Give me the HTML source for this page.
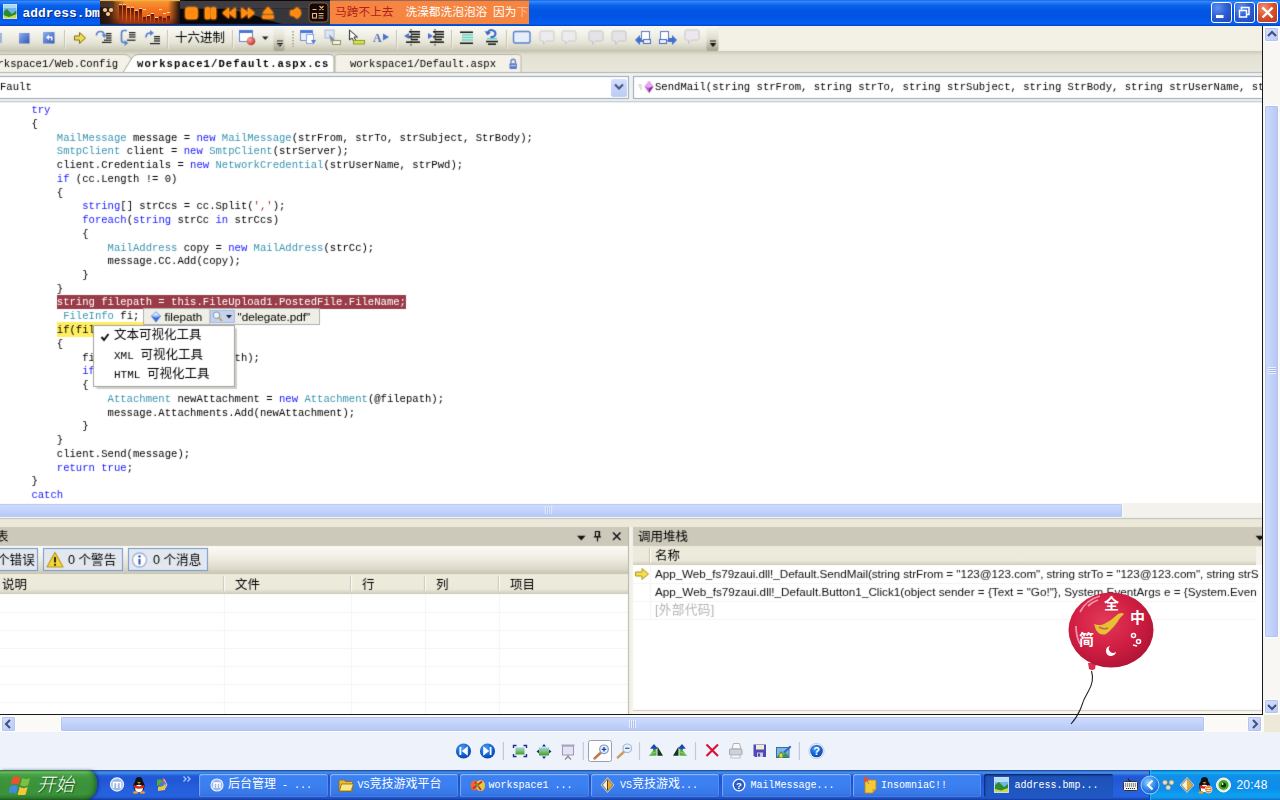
<!DOCTYPE html>
<html lang="zh-CN">
<head>
<meta charset="utf-8">
<title>address.bmp</title>
<style>
*{box-sizing:border-box;margin:0;padding:0}
html,body{width:1280px;height:800px;overflow:hidden;background:#fff}
body{position:relative;font-family:"Liberation Sans","Noto Sans CJK SC",sans-serif;font-size:12px;color:#000}
.abs{position:absolute}
/* ---------- XP title bar ---------- */
#title{left:0;top:0;width:1280px;height:26px;background:linear-gradient(to bottom,#0058e6 0%,#3a8cf5 4%,#2a7ff5 9%,#0a63ea 20%,#0356e3 40%,#0254e3 60%,#0358ea 78%,#0660f4 88%,#0556e6 94%,#0142c0 100%)}
#title .ico{left:3px;top:4px;width:14px;height:15px}
#title .cap{left:22.500px;top:5.500px;font:bold 12.9px/16px "Liberation Mono",monospace;color:#fff;white-space:nowrap;text-shadow:1px 1px 0 #0a2a80}
.wbtn{top:2px;width:21px;height:21px;border:1px solid #fff;border-radius:3px;background:radial-gradient(circle at 30% 25%,#5f92f2 0%,#2d5fd6 45%,#1c46b8 100%)}
.wbtn.close{background:radial-gradient(circle at 30% 25%,#f0906a 0%,#d9502c 50%,#b8381a 100%)}
/* ---------- inner screenshot (VS) ---------- */
#vs{left:0;top:26px;width:1262px;height:688px;background:#fff;overflow:hidden;filter:url(#soft)}
#vsedge{left:1262px;top:26px;width:1.300px;height:689px;background:#1a1a1a}
#vsbot{left:0;top:713.500px;width:1264px;height:1.600px;background:#1a1a1a}
.cn{font-family:"Liberation Sans","Noto Sans CJK SC",sans-serif}
/* toolbar */
#tb{left:0;top:0;width:1262px;height:26px;background:#f3f1e6}
#tb .grad{left:0;top:0;width:718px;height:26px;background:linear-gradient(to bottom,#f9f8f3 0%,#f3f2ea 30%,#e6e4d6 65%,#cfcdbc 90%,#bab8a4 100%)}
#tabs{left:0;top:24.500px;width:1262px;height:22.500px;background:linear-gradient(to bottom,#c6c3b1 0,#d8d5c6 2px,#e3e1d3 4.500px,#e6e4d7 60%,#eae8de 100%)}
#nav{left:0;top:46.500px;width:1262px;height:30px;background:#eef1f3}
#code{left:0;top:76.500px;width:1262px;height:400.500px;background:#fff}
pre.src{position:absolute;left:31.400px;top:1.500px;font:10.58px/13.75px "Liberation Mono",monospace;color:#000;white-space:pre}
.bp{background:#9a3c48;color:#fff;padding:1.2px 0 0.6px}.cur{background:#ffee62;padding:1.6px 0 0.8px}
.k{color:#1a1aff}.t{color:#3a95b0}.s{color:#a33}

/* tabs */
.tab{position:absolute;top:4.500px;height:19px;font:10.58px/18px "Liberation Mono",monospace;white-space:nowrap;color:#000}
.tab.on{font-weight:bold;letter-spacing:1.05px}
/* nav combos */
.combo{position:absolute;top:3.500px;height:23px;background:#fff;border:1px solid #98a5b3;font:10.58px/21px "Liberation Mono",monospace;white-space:nowrap;overflow:hidden}
.dd{position:absolute;background:linear-gradient(to bottom,#d3defa,#bccbf5);border-radius:2px}
/* scrollbars XP */
.sbtrack{position:absolute;background:#f3f2ec}
.sbthumb{position:absolute;background:linear-gradient(to bottom,#cfdcfc 0%,#c2d2fa 50%,#b4c6f4 100%);border:1px solid #fff;border-radius:2px;box-shadow:0 0 0 1px #b4c4ee inset}
.sbthumbv{position:absolute;background:linear-gradient(to right,#cfdcfc 0%,#c2d2fa 50%,#b4c6f4 100%);border:1px solid #fff;border-radius:2px;box-shadow:0 0 0 1px #b4c4ee inset}
.sbbtn{position:absolute;background:linear-gradient(135deg,#d6e1fc,#b9c9f5);border:1px solid #fff;border-radius:2px;box-shadow:0 0 0 1px #b4c4ee inset}
/* tool windows */
.twcap{position:absolute;height:19px;background:#ccc8ba;font:12.5px/20.500px "Liberation Sans","Noto Sans CJK SC",sans-serif;white-space:nowrap;overflow:hidden}
.hdr{position:absolute;background:linear-gradient(to bottom,#ecebdc 0%,#ebe9da 75%,#d8d5c4 92%,#c9c6b4 100%)}
.hdr span{position:absolute;top:2px;font:12.5px/19px "Liberation Sans","Noto Sans CJK SC",sans-serif;white-space:nowrap}
.hdr i{position:absolute;top:2px;width:2px;height:15px;border-left:1px solid #c7c5b2;border-right:1px solid #fff}
.gl{position:absolute;background:#f4f4ef}
.elbtn{position:absolute;top:2px;height:23px;border:1px solid #6f95cf;background:#e3e7ee;font:12.6px/22px "Liberation Sans","Noto Sans CJK SC",sans-serif;white-space:nowrap;overflow:hidden}
.csrow{position:absolute;left:655px;font:11.7px/18px "Liberation Sans","Noto Sans CJK SC",sans-serif;white-space:nowrap;color:#111;letter-spacing:-0.05px}

/* ---------- XP taskbar ---------- */
#taskbar{left:0;top:770px;width:1280px;height:30px;background:linear-gradient(to bottom,#1f2f86 0,#3165c4 3%,#3682e5 6%,#4490e6 10%,#3883e5 12%,#2b71e0 15%,#2663da 18%,#235bd6 20%,#2258d5 23%,#2157d6 38%,#245ddb 54%,#2562df 86%,#245fdc 89%,#2158d4 92%,#1d4ec0 95%,#1941a5 98%)}
#start{left:0;top:0;width:97px;height:30px;border-radius:0 9px 12px 0/0 14px 16px 0;background:linear-gradient(to bottom,#2f7f2f 0%,#6fbf6a 7%,#4aa548 14%,#3d963d 28%,#3a913a 60%,#3b943b 80%,#2f7e2f 93%,#225f22 100%);box-shadow:inset -3px 0 4px -1px rgba(20,70,20,.6),2px 0 3px rgba(10,30,110,.55)}
#start .txt{left:37px;top:2px;font:italic 300 18.500px/26px "Liberation Sans","Noto Sans CJK SC",sans-serif;color:#fff;text-shadow:1px 1px 1px rgba(0,40,0,.55);white-space:nowrap}
.tbtn{position:absolute;top:3.500px;height:23.500px;width:128.500px;border-radius:2.500px;background:linear-gradient(to bottom,#5a97f5 0%,#3c81f3 10%,#3b7ff0 50%,#3878e8 85%,#2f6bd8 100%);box-shadow:inset 0 0 0 1px rgba(255,255,255,.12),inset 1px 1px 1px rgba(255,255,255,.25),0 0 1px rgba(0,0,60,.5);color:#fff;font:12px/22px "Liberation Mono","Noto Sans CJK SC",monospace;white-space:nowrap;overflow:hidden}
.tbtn.act{background:linear-gradient(to bottom,#173f9a 0%,#1e52b7 12%,#1f55bd 60%,#2058c2 100%);box-shadow:inset 1px 1px 2px rgba(0,0,40,.55)}
.tbtn span{position:absolute;top:0.500px}
.tbtn .l{font-size:10px}
.tbtn b{font-weight:400;font-size:10px}
#tray{left:1149px;top:0;width:131px;height:30px;background:linear-gradient(to bottom,#0c59b9 1%,#139ee9 6%,#18b5f2 10%,#139beb 14%,#1290e8 19%,#0d8dea 63%,#0d9ff1 81%,#0f9eed 88%,#119be9 91%,#1392e2 94%,#137ed7 97%,#095bc9 100%);border-left:1px solid #1042af;box-shadow:inset 1px 0 1px #18bbff}
</style>
</head>
<body>
<svg width="0" height="0" style="position:absolute"><defs><filter id="soft" x="0" y="0" width="100%" height="100%" color-interpolation-filters="sRGB"><feConvolveMatrix order="3" kernelMatrix="0.011 0.084 0.011 0.084 0.62 0.084 0.011 0.084 0.011" divisor="1" edgeMode="duplicate" preserveAlpha="true"/></filter></defs></svg>
<!-- XP title bar of the picture viewer -->
<div id="title" class="abs">
  <svg class="abs ico" viewBox="0 0 14 15"><rect width="14" height="15" fill="#6fb6e8"/><rect y="0" width="14" height="4" fill="#a9d6f3"/><path d="M0 15V8l4-3 5 5 5-4v9z" fill="#2e8a2e"/><path d="M0 15v-4l6 2 8-3v5z" fill="#c7d94a"/><rect width="14" height="15" fill="none" stroke="#e8f0ff" stroke-width="1"/></svg>
  <div class="abs cap">address.bm</div>
  <svg class="abs" style="left:100px;top:0" width="230" height="25" viewBox="100 0 230 25"><defs><linearGradient id="mo" x1="0" y1="0" x2="0" y2="1"><stop offset="0" stop-color="#f89a3a"/><stop offset="0.3" stop-color="#f57c22"/><stop offset="0.7" stop-color="#e8621a"/><stop offset="1" stop-color="#8a3010"/></linearGradient><linearGradient id="ml" x1="0" y1="0" x2="1" y2="0"><stop offset="0" stop-color="#1e120e"/><stop offset="0.1" stop-color="#24140e" stop-opacity="0.920"/><stop offset="0.3" stop-color="#3a1a0c" stop-opacity="0"/><stop offset="0.8" stop-color="#2a1a14" stop-opacity="0"/><stop offset="0.93" stop-color="#1a1212" stop-opacity="0.950"/><stop offset="1" stop-color="#141010"/></linearGradient><linearGradient id="mb" x1="0" y1="0" x2="0" y2="1"><stop offset="0" stop-color="#5a1208"/><stop offset="1" stop-color="#a03410" stop-opacity="0.600"/></linearGradient><radialGradient id="gl"><stop offset="0" stop-color="#ff9a18"/><stop offset="0.6" stop-color="#ff8a10"/><stop offset="1" stop-color="#ff7a00" stop-opacity="0"/></radialGradient><filter id="bf" x="-40%" y="-40%" width="180%" height="180%" color-interpolation-filters="sRGB"><feGaussianBlur stdDeviation="1.300" result="b"/><feMerge><feMergeNode in="b"/><feMergeNode in="b"/><feMergeNode in="SourceGraphic"/></feMerge></filter></defs><rect x="100" y="0" width="230" height="25" fill="#0c0808"/><rect x="100" y="0" width="85" height="24.500" fill="url(#mo)"/><rect x="100" y="0" width="85" height="24.500" fill="url(#ml)"/><rect x="100" y="0" width="80" height="1.200" fill="#f5b040"/><rect x="100" y="1.200" width="14" height="6" fill="#4a3a34" opacity="0.8"/><rect x="180" y="1" width="150" height="7.500" fill="#3e3c40"/><rect x="180" y="8.500" width="150" height="16" fill="#37363b"/><path d="M180 9H226Q250 13 264 19L284 24.500H180z" fill="#0a0808"/><rect x="100" y="23.800" width="230" height="1.200" fill="#2a2a38"/><rect x="119" y="5" width="3" height="18.5" fill="url(#mb)"/><rect x="123" y="5" width="3" height="18.5" fill="url(#mb)"/><rect x="127" y="7.5" width="3" height="16.0" fill="url(#mb)"/><rect x="131" y="7.5" width="3" height="16.0" fill="url(#mb)"/><rect x="135" y="11" width="3" height="12.5" fill="url(#mb)"/><rect x="139" y="9" width="3" height="14.5" fill="url(#mb)"/><rect x="143" y="17" width="3" height="6.5" fill="url(#mb)"/><rect x="147" y="16" width="3" height="7.5" fill="url(#mb)"/><rect x="151" y="14" width="3" height="9.5" fill="url(#mb)"/><rect x="155" y="18" width="3" height="5.5" fill="url(#mb)"/><rect x="159" y="16.5" width="3" height="7.0" fill="url(#mb)"/><rect x="163" y="18" width="3" height="5.5" fill="url(#mb)"/><rect x="167" y="16" width="3" height="7.5" fill="url(#mb)"/><rect x="119" y="4.2" width="3" height="1" fill="#ffd9a0"/><rect x="123" y="4.2" width="3" height="1" fill="#ffd9a0"/><rect x="127" y="6.8" width="3" height="1" fill="#ffd9a0"/><rect x="131" y="6.8" width="3" height="1" fill="#ffd9a0"/><rect x="135" y="9.8" width="3" height="1" fill="#ffd9a0"/><rect x="139" y="8" width="3" height="1" fill="#ffd9a0"/><rect x="143" y="9" width="3" height="1" fill="#ffd9a0"/><rect x="147" y="15" width="3" height="1" fill="#ffd9a0"/><rect x="151" y="13" width="3" height="1" fill="#ffd9a0"/><rect x="155" y="17" width="3" height="1" fill="#ffd9a0"/><rect x="159" y="9" width="3" height="1" fill="#ffd9a0"/><rect x="163" y="13" width="3" height="1" fill="#ffd9a0"/><rect x="167" y="12" width="3" height="1" fill="#ffd9a0"/><circle cx="105" cy="10" r="2.100" fill="#f4c890"/><circle cx="111" cy="10" r="2.100" fill="#f4c890"/><circle cx="108" cy="14" r="2.100" fill="#f4c890"/><g filter="url(#bf)"><rect x="185.500" y="7.500" width="12" height="11.500" rx="2.500" fill="#ff8c10"/><rect x="205" y="7.500" width="5" height="11.500" rx="1.500" fill="#ff8c10"/><rect x="211" y="7.500" width="5" height="11.500" rx="1.500" fill="#ff8c10"/><path d="M229 7.500v11l-6.500-5.500zM235.500 7.500v11l-6.500-5.500z" fill="#ff8c10"/><path d="M241.500 7.500v11l6.500-5.500zM248 7.500v11l6.500-5.500z" fill="#ff8c10"/><path d="M262.500 13.500h11l-5.500-6.500zM262.500 15.500h11v3h-11z" fill="#ff8c10"/><path d="M290.500 10.500h3l4-3.500v12l-4-3.500h-3z" fill="#ff8c10"/><path d="M298 9q3.500 4 0 8" fill="none" stroke="#ff8c10" stroke-width="1.800"/></g><rect x="309" y="3" width="19" height="19" rx="3.500" fill="#120806" stroke="#8a5a3a" stroke-width="1"/><path d="M312.500 9.500h4M319.500 6l4 4M323.500 6l-4 4M318.500 13.500h5M318.500 15.800h5M318.500 18h5" stroke="#eab680" stroke-width="1.100" fill="none"/><rect x="312.500" y="13.500" width="4" height="4.500" fill="none" stroke="#eab680" stroke-width="1.100"/></svg><div class="abs" style="left:330px;top:0;width:199px;height:24px;background:#f58540;border-top:1px solid #9a6a58;overflow:hidden;white-space:nowrap;font:11.700px/22px &quot;Liberation Sans&quot;,&quot;Noto Sans CJK SC&quot;,sans-serif;color:#fff"><span style="color:#b3201c;margin-left:5px">马跨不上去</span><span style="margin-left:12px">洗澡都洗泡泡浴&ensp;因为</span><span style="opacity:.45">下</span></div><svg class="abs" style="left:1211px;top:2px;z-index:3" width="67" height="21" viewBox="0 0 67 21"><rect x="5" y="13" width="7.500" height="3" fill="#fff"/><path d="M30.500 7.500v-2h7.500v7h-2.500M28.500 8.500h7v6.500h-7z" fill="none" stroke="#fff" stroke-width="1.500"/><path d="M51.500 5.500l10 10M61.500 5.500l-10 10" stroke="#fff" stroke-width="2.400"/></svg>
  <div class="abs wbtn" style="left:1211px"></div>
  <div class="abs wbtn" style="left:1234px"></div>
  <div class="abs wbtn close" style="left:1257px"></div>
</div>

<!-- the displayed bitmap: a Visual Studio screenshot -->
<div id="vs" class="abs">
  <div id="tb" class="abs"><div class="abs grad"></div><svg class="abs" style="left:0;top:0" width="720" height="26" viewBox="0 0 720 26"><defs><linearGradient id="bl" x1="0" y1="0" x2="1" y2="1"><stop offset="0" stop-color="#8fb0f0"/><stop offset="1" stop-color="#2f55b8"/></linearGradient><radialGradient id="rd" cx="0.35" cy="0.35" r="0.7"><stop offset="0" stop-color="#f7a9a0"/><stop offset="1" stop-color="#b8342f"/></radialGradient><linearGradient id="ov" x1="0" y1="0" x2="0" y2="1"><stop offset="0" stop-color="#ecebe0" stop-opacity="0.3"/><stop offset="0.5" stop-color="#dcdacb"/><stop offset="1" stop-color="#a3a08b"/></linearGradient></defs><rect x="-2" y="7" width="4" height="10" fill="#9eb3e0"/><rect x="19" y="7" width="10.500" height="10.500" fill="url(#bl)"/><rect x="43" y="6" width="11.500" height="11.500" fill="url(#bl)"/><path d="M46 11.500l3-3v2h3.500v4h-1.500v-2.500h-2v2z" fill="#fff"/><path d="M64.5 4V22" stroke="#c5c2b0"/><path d="M65.5 5V23" stroke="#fff" opacity="0.55"/><path d="M74.500 10h5v-3.500l6 5.500l-6 5.500v-3.500h-5z" fill="#f3dc4c" stroke="#7a6a1c" stroke-width="1"/><path d="M96.500 9.500q0-4 4-4q3.500 0 3.500 3.500" fill="none" stroke="#5a80d0" stroke-width="1.700"/><path d="M101.500 8.500h5.500l-2.800 3.500z" fill="#5a80d0"/><rect x="106" y="7" width="5.5" height="1.200" fill="#1a1a1a"/><rect x="106" y="9.2" width="5.5" height="1.200" fill="#1a1a1a"/><rect x="106" y="11.4" width="5.5" height="1.200" fill="#1a1a1a"/><rect x="104" y="13.6" width="7.5" height="1.200" fill="#1a1a1a"/><rect x="102" y="15.8" width="9.5" height="1.200" fill="#1a1a1a"/><path d="M127 4.500h-3q-2.500 0-2.500 2.500v7q0 2.500 2.500 2.500h1" fill="none" stroke="#5a80d0" stroke-width="1.700"/><path d="M124.500 14l3.800 3l-3.800 3z" fill="#5a80d0"/><rect x="129" y="6" width="6.5" height="1.200" fill="#1a1a1a"/><rect x="129" y="8.2" width="6.5" height="1.200" fill="#1a1a1a"/><rect x="129" y="10.4" width="6.5" height="1.200" fill="#1a1a1a"/><rect x="127" y="13.6" width="8.5" height="1.200" fill="#1a1a1a"/><path d="M146 11.500q0-4.500 4-4.500h1" fill="none" stroke="#5a80d0" stroke-width="1.700"/><path d="M150 4l4 3l-4 3z" fill="#5a80d0"/><rect x="154" y="10" width="6" height="1.200" fill="#1a1a1a"/><rect x="154" y="12.2" width="6" height="1.200" fill="#1a1a1a"/><rect x="154" y="14.4" width="6" height="1.200" fill="#1a1a1a"/><rect x="150" y="17" width="10" height="1.200" fill="#1a1a1a"/><path d="M167.5 4V22" stroke="#c5c2b0"/><path d="M168.5 5V23" stroke="#fff" opacity="0.55"/><path d="M232.5 4V22" stroke="#c5c2b0"/><path d="M233.5 5V23" stroke="#fff" opacity="0.55"/><rect x="239.500" y="4.500" width="13" height="11" fill="#fff" stroke="#5e86d4"/><rect x="239.500" y="4.500" width="13" height="2.500" fill="#4a77d4"/><circle cx="251" cy="15" r="4.300" fill="url(#rd)"/><path d="M262 10.500h6.500l-3.250 3.500z" fill="#222"/><rect x="273.500" y="2" width="11" height="23" rx="2" fill="url(#ov)"/><path d="M277 15h6M277.500 17.500h5l-2.500 3z" stroke="#111" fill="#111" stroke-width="1"/><path d="M278 16h6M278.500 18.500h5l-2.500 3z" stroke="#fff" fill="none" stroke-width="0.600" opacity="0.700"/><path d="M293 5v16" stroke="#b0ad9a" stroke-width="2" stroke-dasharray="1.500 1.500"/><rect x="300.500" y="4.500" width="12" height="10" fill="#eaf1fd" stroke="#6c8fd6"/><rect x="300.500" y="4.500" width="12" height="2.500" fill="#4a77d4"/><rect x="306.500" y="8.500" width="7" height="9" fill="#fff" stroke="#8aa4dc"/><path d="M311 14h5l-2.500 4z" fill="#4a77d4"/><rect x="325" y="4" width="9" height="8" fill="#dfe6f5" stroke="#a9b7d8"/><path d="M329 8l6 6h-3l-1 3z" fill="#7f8fa8"/><rect x="332.500" y="14.500" width="8" height="4" fill="#f4f4e0" stroke="#8f9060"/><path d="M349.500 4l0 10l2.500-2l2 4l2-1l-2-4h3.500z" fill="#fff" stroke="#222" stroke-width="1"/><rect x="353.500" y="14.500" width="11" height="3.500" fill="#d7e64a" stroke="#8a9a20"/><text x="373" y="16" font-family="Liberation Serif,serif" font-weight="bold" font-size="12" fill="#5a6fb5">A</text><path d="M383 7.500l6 3.500l-6 3.500z" fill="#4a72d0"/><path d="M396.5 4V22" stroke="#c5c2b0"/><path d="M397.5 5V23" stroke="#fff" opacity="0.55"/><path d="M404 10l5-3v6z" fill="#4a72d0"/><rect x="409" y="5.0" width="11" height="1.5" fill="#111"/><rect x="411" y="7.6" width="9" height="1.5" fill="#111"/><rect x="409" y="10.2" width="11" height="1.5" fill="#111"/><rect x="411" y="12.8" width="7" height="1.5" fill="#111"/><rect x="406" y="15.4" width="14" height="1.5" fill="#111"/><path d="M411 3v17" stroke="#111" stroke-dasharray="1.500 1.500"/><path d="M428 7l5 3l-5 3z" fill="#4a72d0"/><rect x="433" y="5.0" width="11" height="1.5" fill="#111"/><rect x="435" y="7.6" width="9" height="1.5" fill="#111"/><rect x="433" y="10.2" width="11" height="1.5" fill="#111"/><rect x="435" y="12.8" width="7" height="1.5" fill="#111"/><rect x="430" y="15.4" width="14" height="1.5" fill="#111"/><path d="M435 3v17" stroke="#111" stroke-dasharray="1.500 1.500"/><path d="M451.5 4V22" stroke="#c5c2b0"/><path d="M452.5 5V23" stroke="#fff" opacity="0.55"/><rect x="460" y="5.5" width="13" height="1.5" fill="#111"/><rect x="462" y="8.1" width="11" height="1.5" fill="#63d6c4"/><rect x="462" y="10.7" width="11" height="1.5" fill="#63d6c4"/><rect x="462" y="13.3" width="11" height="1.5" fill="#63d6c4"/><rect x="460" y="16.5" width="13" height="1.5" fill="#111"/><path d="M487.500 7.500a4 3.500 0 1 1 3 3.500" fill="none" stroke="#3a66c8" stroke-width="2"/><path d="M484.500 5l3 4.500l3.500-3z" fill="#3a66c8"/><rect x="487" y="12.0" width="10" height="1.5" fill="#63d6c4"/><rect x="486" y="14.8" width="12" height="1.5" fill="#111"/><rect x="488" y="17.4" width="8" height="1.5" fill="#111"/><path d="M506.5 4V22" stroke="#c5c2b0"/><path d="M507.5 5V23" stroke="#fff" opacity="0.55"/><rect x="513.500" y="5.500" width="16.500" height="11.500" rx="2" fill="#e6eefc" stroke="#5a7fd0" stroke-width="1.400"/><path d="M540 6.5q0-1.500 1.500-1.500h11q1.500 0 1.500 1.500v7q0 1.500-1.500 1.500h-6l-3 3.500v-3.500h-2q-1.500 0-1.500-1.500z" fill="#ececee" stroke="#c9c9cc"/><path d="M562 6.5q0-1.500 1.500-1.500h11q1.500 0 1.500 1.500v7q0 1.500-1.500 1.500h-6l-3 3.500v-3.500h-2q-1.500 0-1.500-1.500z" fill="#ececee" stroke="#c9c9cc"/><path d="M589 6.5q0-1.500 1.500-1.500h11q1.500 0 1.500 1.500v7q0 1.500-1.500 1.500h-6l-3 3.500v-3.500h-2q-1.500 0-1.500-1.500z" fill="#e4e4e8" stroke="#c4c4c8"/><path d="M612 6.5q0-1.500 1.500-1.500h11q1.500 0 1.500 1.500v7q0 1.500-1.500 1.500h-6l-3 3.500v-3.500h-2q-1.500 0-1.500-1.500z" fill="#e4e4e8" stroke="#c4c4c8"/><path d="M635 14l5-5v3h4v4h-4v3z" fill="#3f6fd0"/><rect x="641.500" y="5.500" width="8" height="9" fill="#fff" stroke="#5a7ac0"/><rect x="643.500" y="13.500" width="7" height="4" fill="#eaf0fc" stroke="#4a6ab8"/><rect x="660.500" y="5.500" width="8" height="9" fill="#fff" stroke="#5a7ac0"/><rect x="659.500" y="13.500" width="7" height="4" fill="#eaf0fc" stroke="#4a6ab8"/><path d="M677 14l-5-5v3h-4v4h4v3z" fill="#3f6fd0"/><path d="M685 5.5q0-1.500 1.500-1.500h11q1.500 0 1.500 1.500v7q0 1.500-1.500 1.500h-6l-3 3.500v-3.500h-2q-1.500 0-1.500-1.500z" fill="#ebe8ee" stroke="#c8c4cc"/><rect x="706.500" y="2" width="12" height="23" rx="2" fill="url(#ov)"/><path d="M710 15h6M710.500 17.500h5l-2.500 3z" stroke="#111" fill="#111" stroke-width="1"/></svg><div class="abs" style="left:175px;top:4.700px;font:12.5px/15px &quot;Liberation Sans&quot;,&quot;Noto Sans CJK SC&quot;,sans-serif;white-space:nowrap">十六进制</div></div>
  <div id="tabs" class="abs">
    <svg class="abs" style="left:0;top:1.500px" width="540" height="22" viewBox="0 0 540 22">
      <path d="M-2 21.5V4.5Q-2 2.5 1 2.5H124Q128 2.5 130 5L139 21.5z" fill="#f3f1e8" stroke="#b9b6a5"/>
      <path d="M335 21.5V5.5Q335 2.5 338 2.5H518Q521 2.5 521 5.5V21.5z" fill="#f3f1e8" stroke="#b9b6a5"/>
      <path d="M122 22L132 6Q134 2.5 138 2.5H330Q334 2.5 334 6V22z" fill="#fff" stroke="#a9a798"/>
      <g transform="translate(508.500,6.500)"><path d="M2.500 5V3a2.200 2.200 0 0 1 4.400 0V5" fill="none" stroke="#6d86c9" stroke-width="1.400"/><rect x="1" y="4.800" width="7.400" height="5.600" rx="1" fill="#5a78cf"/><rect x="2" y="6.500" width="5.400" height="1.200" fill="#b9c8f0"/></g>
    </svg>
    <div class="tab" style="left:-2.500px">rkspace1/Web.Config</div>
    <div class="tab on" style="left:137px">workspace1/Default.aspx.cs</div>
    <div class="tab" style="left:350px">workspace1/Default.aspx</div>
    <div class="abs" style="left:0;top:21px;width:1262px;height:1.500px;background:#b4b3a6"></div>
  </div>
  <div id="nav" class="abs">
    <div class="combo" style="left:-3px;width:632px"><span style="margin-left:2px">Fault</span>
      <div class="dd" style="left:613px;top:1.500px;width:15.500px;height:18px"></div>
      <svg class="abs" style="left:616px;top:6px" width="10" height="8" viewBox="0 0 10 8"><path d="M1 1.500L5 5.500L9 1.500" fill="none" stroke="#3f4f80" stroke-width="2"/></svg>
    </div>
    <div class="combo" style="left:633px;width:640px">
      <svg class="abs" style="left:4px;top:3px" width="17" height="15" viewBox="0 0 17 15"><path d="M0 5h4M1 7h3M2 9h2" stroke="#c9c4a8" stroke-width="1"/><path d="M11 1L15.500 6.500L11 13L6.500 6.500z" fill="#c05ed0"/><path d="M11 1L15.500 6.500L11 8L6.500 6.500z" fill="#e9a4f2"/><path d="M11 8L15.500 6.500L11 13z" fill="#7e2d92"/></svg>
      <span style="margin-left:21px">SendMail(string strFrom, string strTo, string strSubject, string StrBody, string strUserName, string strPwd</span>
    </div>
    <div class="abs" style="left:0;top:28.800px;width:1262px;height:1.200px;background:#c4c7c9"></div>
  </div>
  <div id="code" class="abs">
<pre class="src"><span class="k">try</span>
{
    <span class="t">MailMessage</span> message = <span class="k">new</span> <span class="t">MailMessage</span>(strFrom, strTo, strSubject, StrBody);
    <span class="t">SmtpClient</span> client = <span class="k">new</span> <span class="t">SmtpClient</span>(strServer);
    client.Credentials = <span class="k">new</span> <span class="t">NetworkCredential</span>(strUserName, strPwd);
    <span class="k">if</span> (cc.Length != 0)
    {
        <span class="k">string</span>[] strCcs = cc.Split(<span class="s">','</span>);
        <span class="k">foreach</span>(<span class="k">string</span> strCc <span class="k">in</span> strCcs)
        {
            <span class="t">MailAddress</span> copy = <span class="k">new</span> <span class="t">MailAddress</span>(strCc);
            message.CC.Add(copy);
        }
    }
    <span class="bp">string filepath = this.FileUpload1.PostedFile.FileName;</span>
     <span class="t">FileInfo</span> fi;
    <span class="cur">if(filepath != "")</span>
    {
        fi = <span class="k">new</span> <span class="t">FileInfo</span>(filepath);
        <span class="k">if</span> (fi.Exists)
        {
            <span class="t">Attachment</span> newAttachment = <span class="k">new</span> <span class="t">Attachment</span>(@filepath);
            message.Attachments.Add(newAttachment);
        }
    }
    client.Send(message);
    <span class="k">return</span> <span class="k">true</span>;
}
<span class="k">catch</span></pre>
  </div>
<div class="sbtrack" style="left:0;top:476.5px;width:1262px;height:15.500px"></div><div class="sbthumb" style="left:-4px;top:476.5px;width:1126.500px;height:15px"></div><svg class="abs" style="left:544px;top:480px" width="9" height="8" viewBox="0 0 9 8"><path d="M1.500 0v8M3.500 0v8M5.500 0v8M7.500 0v8" stroke="#eaf0ff" stroke-width="1"/><path d="M2.500 1v8M4.500 1v8M6.500 1v8" stroke="#9db0e8" stroke-width="0.600"/></svg><div class="abs" style="left:0;top:491.70000000000005px;width:1262px;height:1.300px;background:#b9bcc4"></div><div class="abs" style="left:0;top:493px;width:1262px;height:195px;background:#ece9d8"></div><div class="twcap" style="left:0;top:501px;width:628px"><span style="margin-left:-4px">表</span></div><svg class="abs" style="left:574px;top:503px" width="52" height="15" viewBox="574 529 52 15"><path d="M577 535.800h8.600l-4.300 4.800z" fill="#111"/><path d="M595.500 531.500h4v5h-4zM599 531.500v5M593.800 536.800h7.200M597.500 537v4.500" fill="none" stroke="#111" stroke-width="1.200"/><path d="M613 532.500l7.500 7.500M620.500 532.500l-7.500 7.500" stroke="#111" stroke-width="1.500"/></svg><div class="abs" style="left:0;top:519.8px;width:628px;height:28px;background:linear-gradient(to bottom,#fbfaf6 0%,#f1efe4 40%,#dddacb 80%,#c6c3b0 100%)"><div class="elbtn" style="left:-30px;width:68px;padding-left:26px">个错误</div><div class="elbtn" style="left:43px;width:80px;padding-left:24px">0 个警告</div><div class="elbtn" style="left:128px;width:80px;padding-left:24px">0 个消息</div><svg class="abs" style="left:46px;top:5px" width="20" height="18" viewBox="0 0 20 18"><path d="M9 1.500L17 16H1z" fill="#f7d83a" stroke="#b89a10" stroke-width="1.200" stroke-linejoin="round"/><path d="M9 6v5.500" stroke="#111" stroke-width="1.800"/><circle cx="9" cy="13.800" r="1.100" fill="#111"/></svg><svg class="abs" style="left:131px;top:5px" width="20" height="18" viewBox="0 0 20 18"><circle cx="8.500" cy="9" r="7" fill="#fff" stroke="#9fb2d8" stroke-width="1.300"/><circle cx="8.500" cy="5.500" r="1.200" fill="#2a4fb8"/><path d="M8.500 8v5.500" stroke="#2a4fb8" stroke-width="2"/></svg></div><div class="hdr" style="left:0;top:548px;width:628px;height:20px"><span style="left:2px">说明</span><i style="left:223px"></i><span style="left:235px">文件</span><i style="left:350px"></i><span style="left:362px">行</span><i style="left:424px"></i><span style="left:436px">列</span><i style="left:498px"></i><span style="left:510px">项目</span></div><div class="abs" style="left:0;top:568px;width:628px;height:120px;background:#fff"></div><div class="gl" style="left:0;top:586px;width:628px;height:1px"></div><div class="gl" style="left:0;top:604px;width:628px;height:1px"></div><div class="gl" style="left:0;top:622px;width:628px;height:1px"></div><div class="gl" style="left:0;top:640px;width:628px;height:1px"></div><div class="gl" style="left:0;top:658px;width:628px;height:1px"></div><div class="gl" style="left:0;top:676px;width:628px;height:1px"></div><div class="gl" style="left:224px;top:568px;width:1px;height:120px"></div><div class="gl" style="left:351px;top:568px;width:1px;height:120px"></div><div class="gl" style="left:425px;top:568px;width:1px;height:120px"></div><div class="gl" style="left:499px;top:568px;width:1px;height:120px"></div><div class="twcap" style="left:633px;top:501px;width:629px"><span style="margin-left:5px">调用堆栈</span></div><svg class="abs" style="left:1252px;top:503px" width="10" height="15" viewBox="1252 529 10 15"><path d="M1255.500 535.800h8.600l-4.300 4.800z" fill="#111"/></svg><div class="hdr" style="left:633px;top:520.5px;width:623px;height:18px"><i style="left:15.500px;top:1px"></i><span style="left:22px;line-height:17px;top:1px">名称</span></div><div class="abs" style="left:633px;top:538.5px;width:629px;height:146px;background:#fff"></div><div class="abs" style="left:1256px;top:520.5px;width:6px;height:18px;background:#f4f3ee"></div><div class="gl" style="left:633px;top:556.5px;width:623px;height:1px"></div><div class="gl" style="left:633px;top:574.5px;width:623px;height:1px"></div><div class="gl" style="left:633px;top:592.5px;width:623px;height:1px"></div><div class="gl" style="left:650px;top:538.5px;width:1px;height:54px"></div><div class="abs" style="left:628px;top:501px;width:5px;height:187px;background:#f3f2ea;border-left:1px solid #b4b3a8"></div><div class="abs" style="left:633px;top:684px;width:629px;height:4px;background:#f7f6f1;border-top:1px solid #cfc9ba"></div><svg class="abs" style="left:634px;top:541px" width="16" height="14" viewBox="0 0 16 14"><path d="M1.500 5h6.500v-3.500l6.500 5.500l-6.500 5.500v-3.500h-6.500z" fill="#f5e04a" stroke="#a8921c" stroke-width="1"/></svg><div class="csrow" style="top:539px">App_Web_fs79zaui.dll!_Default.SendMail(string strFrom = &quot;123@123.com&quot;, string strTo = &quot;123@123.com&quot;, string strS</div><div class="csrow" style="top:557px;letter-spacing:0.013px">App_Web_fs79zaui.dll!_Default.Button1_Click1(object sender = {Text = &quot;Go!&quot;}, System.EventArgs e = {System.Even</div><div class="csrow" style="top:575px;color:#b4b4b4;font-size:12.700px;letter-spacing:0.3px">[外部代码]</div><div class="abs" style="left:143px;top:282px;width:177px;height:16.500px;background:#f0efe6;border:1px solid #aeb0b6;font:11.700px/14px &quot;Liberation Sans&quot;,sans-serif;white-space:nowrap;overflow:hidden"><svg class="abs" style="left:6px;top:1.500px" width="12" height="12" viewBox="0 0 12 12"><path d="M6 0.500L11 5L6 11.500L1 5z" fill="#3f6ed8"/><path d="M6 0.500L11 5L6 6.500L1 5z" fill="#9cc0f8"/><path d="M3 4.500L6 2L8 4z" fill="#fff" opacity="0.800"/></svg><span class="abs" style="left:20.500px;top:0.500px">filepath</span><div class="abs" style="left:64.500px;top:0;width:1px;height:15px;background:#c9c9c4"></div><div class="abs" style="left:66px;top:0.500px;width:25px;height:13.500px;background:#c4d3ef;border:1px solid #a9bbe0"></div><svg class="abs" style="left:68px;top:2px" width="22" height="11" viewBox="0 0 22 11"><circle cx="4.500" cy="4.200" r="3.200" fill="#e8f4ff" stroke="#8a9ab0" stroke-width="1.100"/><path d="M7 6.500l3 3.500" stroke="#c8a040" stroke-width="1.800"/><path d="M14 4h6l-3 3.500z" fill="#222"/></svg><span class="abs" style="left:93.500px;top:0.500px">&quot;delegate.pdf&quot;</span></div><div class="abs" style="left:93px;top:298.5px;width:141.500px;height:62px;background:#fff;border:1px solid #a5a59c;box-shadow:1.500px 1.500px 1px rgba(120,120,110,.35);font:12.500px/19px &quot;Liberation Mono&quot;,&quot;Noto Sans CJK SC&quot;,monospace;white-space:nowrap"><svg class="abs" style="left:6px;top:7px" width="10" height="9" viewBox="0 0 10 9"><path d="M1.500 4l2.500 3l4.500-6" fill="none" stroke="#111" stroke-width="2"/></svg><div class="abs" style="left:20px;top:1.500px">文本可视化工具</div><div class="abs" style="left:20px;top:21.200px"><span style="font-size:11px">XML </span>可视化工具</div><div class="abs" style="left:20px;top:40.200px"><span style="font-size:11px">HTML </span>可视化工具</div></div>
</div>
<div id="vsedge" class="abs"></div>
<div id="vsbot" class="abs"></div>
<div class="sbtrack" style="left:1263px;top:26px;width:17px;height:689px;background:#f8f7f3"></div><div class="sbbtn" style="left:1264px;top:27px;width:14.500px;height:14.500px"></div><svg class="abs" style="left:1266.500px;top:30px" width="10" height="8" viewBox="0 0 10 8"><path d="M1 6L5 2L9 6" fill="none" stroke="#3f4f80" stroke-width="2"/></svg><div class="sbthumbv" style="left:1264px;top:104.700px;width:14.500px;height:533px"></div><svg class="abs" style="left:1267.500px;top:366px" width="8" height="9" viewBox="0 0 8 9"><path d="M0 1.500h8M0 3.500h8M0 5.500h8M0 7.500h8" stroke="#eaf0ff" stroke-width="1"/><path d="M1 2.500h8M1 4.500h8M1 6.500h8" stroke="#9db0e8" stroke-width="0.600"/></svg><div class="sbbtn" style="left:1264px;top:698.500px;width:14.500px;height:15.500px"></div><svg class="abs" style="left:1266.500px;top:702.500px" width="10" height="8" viewBox="0 0 10 8"><path d="M1 2L5 6L9 2" fill="none" stroke="#3f4f80" stroke-width="2"/></svg><div class="sbtrack" style="left:0;top:715px;width:1264px;height:17px;background:#fbfaf6"></div><div class="abs" style="left:1264px;top:715px;width:16px;height:17px;background:#ece9d8"></div><div class="sbbtn" style="left:0.500px;top:716px;width:15px;height:15.500px"></div><svg class="abs" style="left:3.500px;top:718.500px" width="8" height="10" viewBox="0 0 8 10"><path d="M6 1L2 5L6 9" fill="none" stroke="#3f4f80" stroke-width="2"/></svg><div class="sbthumb" style="left:60px;top:716px;width:1144.500px;height:15.500px"></div><svg class="abs" style="left:628px;top:719.500px" width="9" height="8" viewBox="0 0 9 8"><path d="M1.500 0v8M3.500 0v8M5.500 0v8M7.500 0v8" stroke="#eaf0ff" stroke-width="1"/><path d="M2.500 1v8M4.500 1v8M6.500 1v8" stroke="#9db0e8" stroke-width="0.600"/></svg><div class="sbbtn" style="left:1247px;top:716px;width:15px;height:15.500px"></div><svg class="abs" style="left:1251px;top:718.500px" width="8" height="10" viewBox="0 0 8 10"><path d="M2 1L6 5L2 9" fill="none" stroke="#3f4f80" stroke-width="2"/></svg><div class="abs" id="pvtb" style="left:0;top:732px;width:1280px;height:38px;background:#eef2fb"></div>
<svg class="abs" style="left:440px;top:736px" width="400" height="30" viewBox="440 736 400 30"><defs><radialGradient id="pb" cx="0.4" cy="0.3" r="0.8"><stop offset="0" stop-color="#4a9af0"/><stop offset="0.6" stop-color="#0e5fd0"/><stop offset="1" stop-color="#083c9c"/></radialGradient><linearGradient id="gr" x1="0" y1="0" x2="0" y2="1"><stop offset="0" stop-color="#9ad0f0"/><stop offset="0.5" stop-color="#7cc070"/><stop offset="1" stop-color="#3a9a30"/></linearGradient></defs><circle cx="463.500" cy="751" r="7.600" fill="url(#pb)"/><rect x="459.500" y="747" width="1.800" height="8" fill="#fff"/><path d="M467.500 746.800l-5.300 4.200l5.300 4.200z" fill="#fff" stroke="#fff" stroke-width="0.600" stroke-linejoin="round"/><circle cx="487.500" cy="751" r="7.600" fill="url(#pb)"/><rect x="489.700" y="747" width="1.800" height="8" fill="#fff"/><path d="M483.500 746.800l5.300 4.200l-5.300 4.200z" fill="#fff" stroke="#fff" stroke-width="0.600" stroke-linejoin="round"/><path d="M503.4 742V760" stroke="#c3c8d8" stroke-width="1.200"/><rect x="515.500" y="747.500" width="9" height="7" fill="url(#gr)"/><path d="M513.500 748v-2.500h3M523.500 745.500h3v2.500M526.500 754v2.500h-3M516.500 756.500h-3v-2.500" fill="none" stroke="#1a2f8a" stroke-width="1.400"/><rect x="539" y="747.500" width="10" height="8" fill="url(#gr)"/><path d="M544 744l-2 2.500h4zM544 759l-2-2.500h4zM536.500 751.500l2.500-2v4zM551.500 751.500l-2.500-2v4z" fill="#1a2f8a"/><rect x="562.500" y="746" width="11" height="9" fill="#e4e2f4" stroke="#9a98b4"/><rect x="561.500" y="744.500" width="13" height="1.800" fill="#a8a6b8"/><path d="M568 755v2.500M568 756.500l-3 3M568 756.500l3 3" stroke="#8a8890" stroke-width="1.200" fill="none"/><path d="M583.3 742V760" stroke="#c3c8d8" stroke-width="1.200"/><rect x="588.500" y="740.500" width="23" height="21" rx="2" fill="#fdfdfe" stroke="#9a9eb0"/><path d="M601 752.500l-6.500 6" stroke="#c07a4a" stroke-width="2.400" stroke-linecap="round"/><circle cx="604" cy="749.300" r="4.300" fill="#dff0fc" stroke="#7a98c8" stroke-width="1.200"/><path d="M601.800 749.300h4.400M604 747.100v4.400" stroke="#1a3fa8" stroke-width="1.300"/><path d="M624.300 751.500l-6.500 6" stroke="#d09a6a" stroke-width="2.400" stroke-linecap="round"/><circle cx="627.300" cy="748.300" r="4.300" fill="#e6f2fc" stroke="#a8b8d8" stroke-width="1.200"/><path d="M625.100 748.300h4.400" stroke="#3a5fb8" stroke-width="1.300"/><path d="M639.5 742V760" stroke="#c3c8d8" stroke-width="1.200"/><path d="M648.500 755.800q5-4 8-4v-5l-2 0q-2 6-6 9z" fill="#58b040"/><path d="M648.500 755.800q4-3 8-4v4z" fill="#58b040"/><path d="M657.500 746.500l5.500 9.300h-5.500z" fill="#123a1a"/><path d="M654 746.500v3.500M651.500 748l2.500-3l2.500 3z" stroke="#1a4ab0" fill="#1a4ab0" stroke-width="1.300"/><path d="M687.500 755.800q-5-4-8-4v-5l2 0q2 6 6 9z" fill="#58b040"/><path d="M687.500 755.800q-4-3-8-4v4z" fill="#58b040"/><path d="M678.500 746.500l-5.500 9.300h5.500z" fill="#123a1a"/><path d="M682 746.500v3.500M679.500 748l2.500-3l2.500 3z" stroke="#1a4ab0" fill="#1a4ab0" stroke-width="1.300"/><path d="M695.5 742V760" stroke="#c3c8d8" stroke-width="1.200"/><path d="M706.500 744.500l11.500 11.500M718 744.500l-11.500 11.500" stroke="#d8143a" stroke-width="2.200"/><path d="M732 749l1.500-5.500h6l1.500 5.500z" fill="#fafafa" stroke="#b0b0b8"/><rect x="729.500" y="749" width="12.500" height="6" rx="1" fill="#d0d0d6" stroke="#a8a8b0"/><path d="M731.500 755l-1 3h10l-1-3z" fill="#f4f4f4" stroke="#b8b8c0" stroke-width="0.800"/><path d="M753.500 744.500h12.500v12.500h-11l-1.500-1.500z" fill="#5048b8"/><rect x="756" y="745" width="8" height="4.500" fill="#f0ecd0"/><rect x="757" y="752.500" width="6" height="4.500" fill="#c8c8d8"/><rect x="758" y="753.500" width="2" height="3" fill="#5048b8"/><rect x="776.500" y="747.500" width="12.500" height="10" fill="#78b8e8" stroke="#3a68a8"/><path d="M777 757l4-6l3 3.500l2-2l3 4.500z" fill="#3a9a30"/><path d="M779.500 757.500v-3l1.500-1.500l1.500 1.500v3z" fill="#e8d040"/><path d="M783 752l7-6.500l1.500 1.500l-7 6.500z" fill="#3a68c8"/><path d="M799.4 742V760" stroke="#c3c8d8" stroke-width="1.200"/><circle cx="816.500" cy="751" r="7.600" fill="#f4f6fc" stroke="#b8c0d8" stroke-width="0.800"/><circle cx="816.500" cy="751" r="6.300" fill="url(#pb)"/><text x="816.500" y="755" text-anchor="middle" font-family="Liberation Sans,sans-serif" font-weight="bold" font-size="11" fill="#fff">?</text></svg>
<svg class="abs" style="left:1060px;top:585px;z-index:5" width="105" height="145" viewBox="1060 585 105 145">
<defs><radialGradient id="bal" cx="0.42" cy="0.38" r="0.65"><stop offset="0" stop-color="#e23a58"/><stop offset="0.55" stop-color="#d21f44"/><stop offset="1" stop-color="#b01436"/></radialGradient></defs>
<path d="M1091.500 671q3 10-3 20q-5 8-8 18q-4 9-9.500 15" fill="none" stroke="#222" stroke-width="1.100"/>
<path d="M1088 663l8 0l-1 6q-3 2-6 0z" fill="#d8304e"/>
<ellipse cx="1111" cy="630" rx="42.500" ry="37.500" fill="url(#bal)"/>
<path d="M1080 612q6-12 20-16M1076 626q0 10 4 18M1088 606q4-4 10-6" fill="none" stroke="#f7c6d0" stroke-width="1.800" opacity="0.700"/>
<path d="M1094 624q6 2 10 0q8-4 14-10q4-2 6 0l-4 4q-6 10-14 16q-6 2-10-4z" fill="#e8c034"/><path d="M1099 627q5 3 9 1" stroke="#c86a4a" stroke-width="1.500" fill="none"/>
<path d="M1116 651.500a5 5 0 1 1-6-5.500a4 4 0 0 0 6 5.500z" fill="#fff"/>
<g fill="#fff" font-family="Liberation Sans,Noto Sans CJK SC,sans-serif" font-weight="bold" font-size="15"><text x="1104" y="609">全</text><text x="1130" y="623">中</text><text x="1079" y="645">简</text></g>
<g fill="none" stroke="#fff" stroke-width="1.500"><circle cx="1133.500" cy="635.500" r="2"/><circle cx="1138.500" cy="641.500" r="2"/><path d="M1133 645l4 1"/></g>
</svg>
<div id="taskbar" class="abs"><div id="start" class="abs"><svg class="abs" style="left:9px;top:4px" width="23" height="21" viewBox="0 0 20 18.500"><path d="M3 3q3.500-2 7 0l-1.800 6.500q-3.500-2-7 0z" fill="#e8542c"/><path d="M11.500 3.500q3.500 2 7 0l-1.800 6.500q-3.500 2-7 0z" fill="#7cc043"/><path d="M0.800 11q3.500-2 7 0l-1.800 6.500q-3.500-2-7 0z" fill="#3f8be0"/><path d="M9.300 11.500q3.500 2 7 0l-1.800 6.500q-3.500 2-7 0z" fill="#f5c83a"/></svg><div class="abs txt">开始</div></div><svg class="abs" style="left:105px;top:3px" width="95" height="24" viewBox="105 773 95 24"><circle cx="117" cy="784.500" r="6.500" fill="#9db8ea" stroke="#e6eefc" stroke-width="1.300"/><path d="M113.500 788v-5.500h7v5.500M117 783v5" fill="none" stroke="#fff" stroke-width="1.600"/><ellipse cx="139" cy="786" rx="5.500" ry="6.500" fill="#111"/><ellipse cx="139" cy="788.500" rx="3.800" ry="3.800" fill="#fff"/><circle cx="139" cy="780.500" r="3.600" fill="#111"/><path d="M134 785q5 2.500 10 0v2.500q-5 2.500-10 0z" fill="#e02a20"/><ellipse cx="135.500" cy="792.500" rx="2.600" ry="1.300" fill="#f0a020"/><ellipse cx="142.500" cy="792.500" rx="2.600" ry="1.300" fill="#f0a020"/><ellipse cx="139" cy="782.800" rx="1.600" ry="0.800" fill="#f0a020"/><path d="M157 780q3-1.500 5 0v6q-2-1.500-5 0z" fill="#58a838"/><path d="M163 777q2 3 2 8l-3-1z" fill="#e86a2c"/><path d="M158 787l8-3l-1 6l-7 1z" fill="#e8c83a"/><path d="M160 783l4-1.500v4l-4 1.500z" fill="#4a78d8"/><path d="M164 779l3 6l-2 3" fill="none" stroke="#c8d8f0" stroke-width="1"/><path d="M183.500 776.500l2.500 2.500l-2.500 2.500M187.500 776.500l2.500 2.500l-2.500 2.500" fill="none" stroke="#a8c8ff" stroke-width="1.300"/></svg><div class="tbtn" style="left:199px"><svg class="abs" style="left:10.500px;top:4.500px" width="14" height="14" viewBox="0 0 14 14"><circle cx="7" cy="7" r="6" fill="#9db8ea" stroke="#e6eefc" stroke-width="1.200"/><path d="M4 10v-5h6v5M7 5.500v4.500" fill="none" stroke="#fff" stroke-width="1.500"/></svg><span style="left:29px">后台管理<b> - ...</b></span></div><div class="tbtn" style="left:329.5px"><svg class="abs" style="left:8px;top:4px" width="16" height="15" viewBox="0 0 16 15"><path d="M1 3q0-1 1-1h4l1.500 1.500h6q1 0 1 1v8q0 1-1 1h-11.500q-1 0-1-1z" fill="#e8b830" stroke="#8a6a10" stroke-width="0.800"/><path d="M1.500 13l2-7h12l-2.500 7z" fill="#fbe68a" stroke="#8a6a10" stroke-width="0.800"/></svg><span style="left:28.0px"><b>VS</b>竞技游戏平台</span></div><div class="tbtn" style="left:460px"><svg class="abs" style="left:9.500px;top:5px" width="16" height="13" viewBox="0 0 16 13"><ellipse cx="4.500" cy="6.500" rx="4" ry="5" fill="#e86a2c"/><ellipse cx="10.500" cy="6.500" rx="4.500" ry="5.500" fill="#e8c83a"/><path d="M3 9.500l9-7M5 3l6 8" stroke="#d8282a" stroke-width="1.800"/><path d="M6 5l3 3" stroke="#58a838" stroke-width="2"/></svg><span style="left:28.5px"><b>workspace1 ...</b></span></div><div class="tbtn" style="left:590.5px"><svg class="abs" style="left:9.500px;top:3.500px" width="15" height="16" viewBox="0 0 15 16"><path d="M7.500 0.500L14 8L7.500 15.500L1 8z" fill="#8a8a80" stroke="#d8d4c0" stroke-width="0.800"/><path d="M7.500 2.500L12 8L7.500 13.500z" fill="#e8a828"/><path d="M7.500 2.500L3 8L7.500 13.500z" fill="#f4f0e0"/><path d="M7.500 3v10" stroke="#6a3a10" stroke-width="1"/></svg><span style="left:29.5px"><b>VS</b>竞技游戏<b>...</b></span></div><div class="tbtn" style="left:722px"><svg class="abs" style="left:10px;top:4.500px" width="14" height="14" viewBox="0 0 14 14"><circle cx="7" cy="7" r="5.800" fill="#2a5ac8" stroke="#fff" stroke-width="1.300"/><text x="7" y="10.500" text-anchor="middle" font-family="Liberation Sans,sans-serif" font-weight="bold" font-size="9.500" fill="#fff">?</text></svg><span style="left:28.5px"><b>MailMessage...</b></span></div><div class="tbtn" style="left:852.5px"><svg class="abs" style="left:9px;top:2.500px" width="16" height="18" viewBox="0 0 16 18"><path d="M3 4h11v9l-3.500 4h-7.500z" fill="#f4c83a" stroke="#b88a10" stroke-width="0.800"/><path d="M14 13h-3.500v4z" fill="#d8a020"/><circle cx="4" cy="3.500" r="2.500" fill="#e8502c"/><path d="M4 4l3 4" stroke="#8a8a8a" stroke-width="1"/></svg><span style="left:28.5px"><b>InsomniaC!!</b></span></div><div class="tbtn act" style="left:984px"><svg class="abs" style="left:10px;top:3.500px" width="15" height="16" viewBox="0 0 15 16"><rect x="0.500" y="0.500" width="14" height="15" fill="#6fb6e8" stroke="#e8f0ff" stroke-width="0.800"/><rect x="1" y="1" width="13" height="4" fill="#b4dcf4"/><path d="M1 15V8l4-3l5 5l4-3v8z" fill="#2e8a2e"/><path d="M1 15v-3l6 1.500l7-2.500v4z" fill="#c7d94a"/></svg><span style="left:30.5px"><b>address.bmp...</b></span></div><svg class="abs" style="left:1123px;top:8px" width="15" height="13" viewBox="0 0 15 13"><path d="M5 0q0 3 3 3" fill="none" stroke="#222" stroke-width="1"/><rect x="0.500" y="3.500" width="14" height="9" rx="1" fill="#f4f4f0" stroke="#333"/><path d="M2 6h11M2 8h11M3 10.500h9" stroke="#333" stroke-width="1.200" stroke-dasharray="1.200 0.800"/></svg><div id="tray" class="abs"><svg class="abs" style="left:-11px;top:3px" width="142" height="24" viewBox="1138 773 142 24"><defs><radialGradient id="tc" cx="0.4" cy="0.35" r="0.7"><stop offset="0" stop-color="#8fd0ff"/><stop offset="0.6" stop-color="#2a86ea"/><stop offset="1" stop-color="#1458c8"/></radialGradient></defs><circle cx="1149" cy="785" r="9" fill="url(#tc)" stroke="#c8e4ff" stroke-width="0.800"/><path d="M1151.500 780.500l-4.500 4.500l4.500 4.500" fill="none" stroke="#fff" stroke-width="2.200"/><circle cx="1164" cy="782.5" r="2.300" fill="#f0dcb8" stroke="#a89878" stroke-width="0.600"/><circle cx="1170.5" cy="782.5" r="2.300" fill="#f0dcb8" stroke="#a89878" stroke-width="0.600"/><circle cx="1167.2" cy="787.5" r="2.300" fill="#f0dcb8" stroke="#a89878" stroke-width="0.600"/><path d="M1186 777.500L1193 785L1186 792.500L1179 785z" fill="#9a9888" stroke="#e0dcc8" stroke-width="0.800"/><path d="M1186 779.500L1191 785L1186 790.500z" fill="#e8a828"/><path d="M1186 779.500L1181 785L1186 790.500z" fill="#f4f0e0"/><ellipse cx="1203.500" cy="786" rx="5.500" ry="6.500" fill="#111"/><ellipse cx="1203.500" cy="788.500" rx="3.800" ry="3.800" fill="#fff"/><circle cx="1203.500" cy="780.500" r="3.600" fill="#111"/><path d="M1198.500 785q5 2.500 10 0v2.500q-5 2.500-10 0z" fill="#e02a20"/><ellipse cx="1200" cy="792.500" rx="2.600" ry="1.300" fill="#f0a020"/><ellipse cx="1203.500" cy="782.800" rx="1.600" ry="0.800" fill="#f0a020"/><circle cx="1207.500" cy="789.500" r="3.600" fill="#f08020" stroke="#fff" stroke-width="0.600"/><path d="M1205.500 788.500h4M1205.500 790.500h4" stroke="#fff" stroke-width="0.900"/><circle cx="1222.500" cy="785" r="7" fill="#e8f0d8" stroke="#fff" stroke-width="1"/><circle cx="1222.500" cy="785" r="5" fill="#48a828"/><circle cx="1222.500" cy="785" r="2.600" fill="#0a3a0a"/><circle cx="1221.500" cy="784" r="0.900" fill="#fff"/></svg><div class="abs" style="left:86.500px;top:8px;font:12px/14px &quot;Liberation Sans&quot;,sans-serif;color:#fff;letter-spacing:0.200px">20:48</div></div></div>
</body>
</html>
